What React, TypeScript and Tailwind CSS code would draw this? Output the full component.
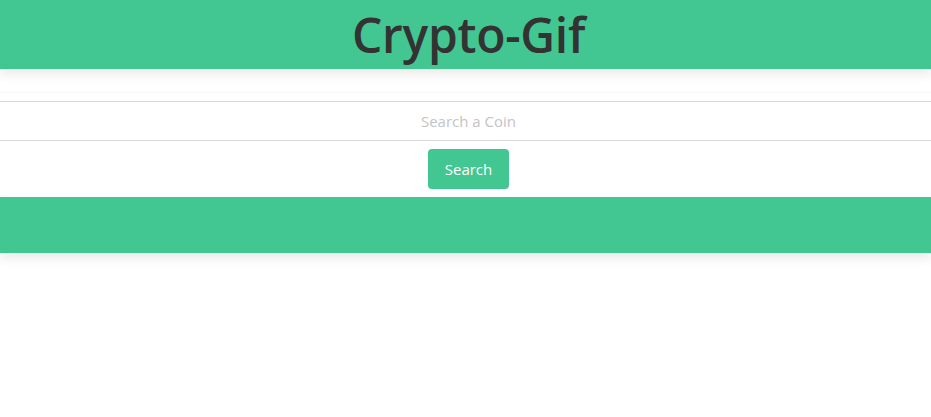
import React from "react";

const App: React.FC = () => {
  return (
    <div className="min-h-[417px] bg-white" style={{ fontFamily: '"Open Sans", "Noto Sans", sans-serif' }}>
      <header className="h-[69px] bg-[#42c792] shadow-[0_6px_10px_rgba(0,0,0,0.08)] flex items-start justify-center pl-[6px] pt-[7px] overflow-hidden">
        <h1 className="text-[48px] leading-[56px] font-semibold text-[#333] tracking-[-0.3px]">Crypto-Gif</h1>
      </header>

      <section className="pt-[23px] flex flex-col items-center">
        <div className="w-full h-px bg-[#f6f6f6]" />
        <input
          className="mt-2 w-full h-[40px] border-y border-[#d9d9d9] text-center pl-[6px] text-[15px] text-[#555] placeholder:text-[#c4c4c4] outline-none"
          placeholder="Search a Coin"
        />
        <button className="mt-2 ml-[6px] w-[81px] h-[40px] rounded-[4px] bg-[#42c792] text-white text-[15px]">Search</button>
      </section>

      <footer className="mt-2 h-[56px] bg-[#42c792] shadow-[0_6px_10px_rgba(0,0,0,0.08)]" />
    </div>
  );
};

export default App;
